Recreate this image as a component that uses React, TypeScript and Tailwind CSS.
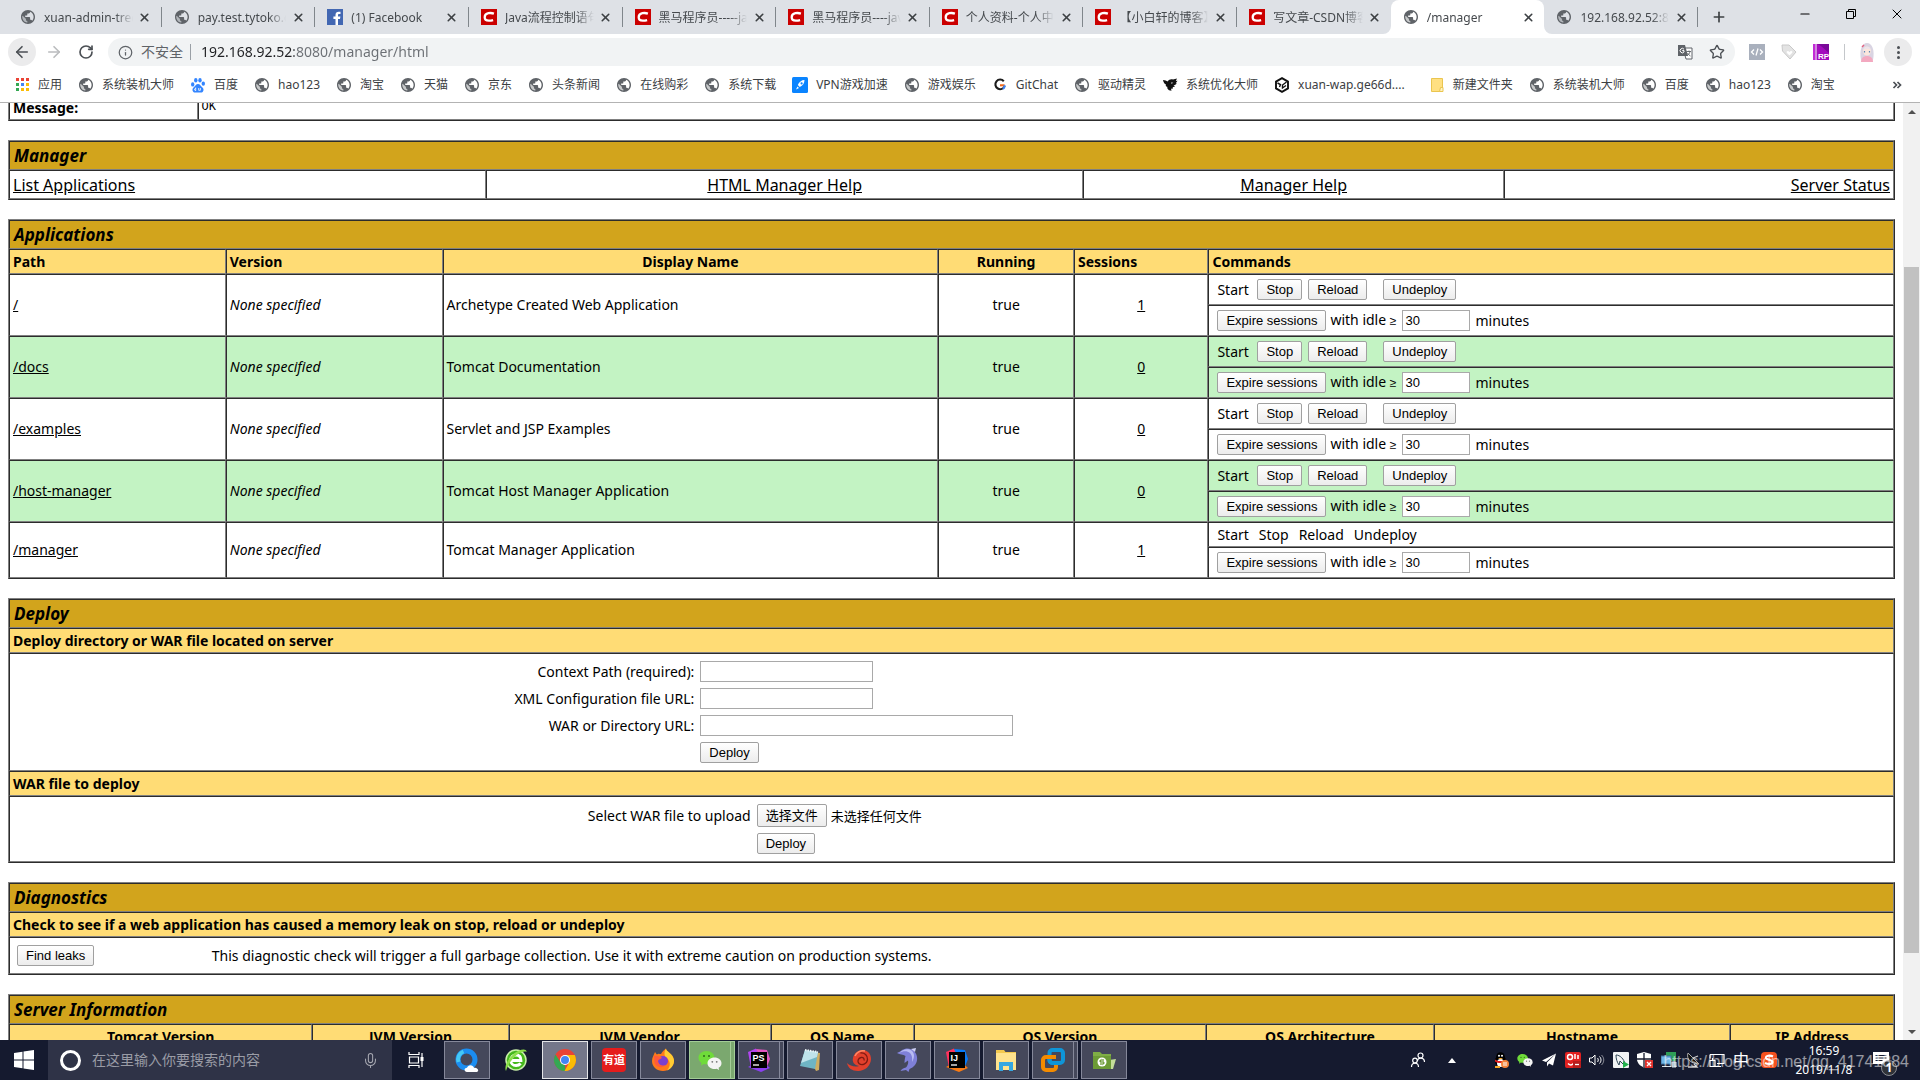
import type { ReactNode } from "react";
import {
  ArrowLeft,
  ArrowRight,
  RotateCw,
  Info,
  Star,
  X,
  Plus,
  Minus,
  Mic,
} from "lucide-react";

/* ---------- favicons ---------- */

function Globe() {
  return (
    <svg viewBox="2 2 20 20" className="size-[14px] text-[#5f6368]" fill="currentColor" aria-hidden="true">
      <path d="M12 2C6.48 2 2 6.48 2 12s4.48 10 10 10 10-4.48 10-10S17.52 2 12 2zm-1 17.93c-3.95-.49-7-3.85-7-7.93 0-.62.08-1.21.21-1.79L9 15v1c0 1.1.9 2 2 2v1.93zm6.9-2.54c-.26-.81-1-1.39-1.9-1.39h-1v-3c0-.55-.45-1-1-1H8v-2h2c.55 0 1-.45 1-1V7h2c1.1 0 2-.9 2-2v-.41c2.93 1.19 5 4.06 5 7.41 0 2.08-.8 3.97-2.1 5.39z" />
      <path d="M4.400 10.500 9 15v1c0 1.100.9 2 2 2v1.900C7 19.500 4 16 4 12z" fill="#5f6368" opacity=".35" />
    </svg>
  );
}

function FacebookIcon() {
  return (
    <svg viewBox="0 0 16 16" className="size-4" aria-hidden="true">
      <rect width="16" height="16" fill="#4267b2" />
      <path d="M11 16V10h2l.4-2.4H11V6.2c0-.8.3-1.2 1.2-1.2h1.3V2.8c-.4 0-1-.1-1.8-.1-2 0-3.2 1.2-3.2 3.2v1.7H6.4V10h2.1v6z" fill="#fff" />
    </svg>
  );
}

function CsdnIcon() {
  return (
    <svg viewBox="0 0 16 16" className="size-4" aria-hidden="true">
      <rect width="16" height="16" fill="#cb0000" />
      <path d="M12.9 4.6C11.2 4 9 3.9 7.400 4.200 5 4.700 3.700 6.400 3.700 8.300c0 2.100 1.500 3.400 4.100 3.400 1.500 0 3-.2 4.300-.6" fill="none" stroke="#fff" strokeWidth="2.3" />
    </svg>
  );
}

function BaiduIcon() {
  return (
    <svg viewBox="0 0 16 16" className="size-4" fill="#3385ff" aria-hidden="true">
      <ellipse cx="2.700" cy="7.400" rx="1.700" ry="2.200" />
      <ellipse cx="5.800" cy="3.200" rx="1.700" ry="2.300" />
      <ellipse cx="10" cy="3.200" rx="1.700" ry="2.300" />
      <ellipse cx="13.300" cy="6.700" rx="1.700" ry="2.100" />
      <path d="M8 7c2.100 0 2.700 2 4.200 3.200 1.600 1.300 1.700 3.200.6 4.500-1.100 1.200-2.900.7-4.800.7s-3.700.5-4.800-.7c-1.100-1.300-1-3.200.6-4.500C5.300 9 5.900 7 8 7z" />
      <path d="M5.700 10.500v3.300M8.700 11v2.300h1.700V11M5.700 13.500c-1.600 0-1.600-2 0-2" stroke="#fff" strokeWidth=".8" fill="none" />
    </svg>
  );
}

function AppsIcon() {
  const c = ["#ea4335", "#ea4335", "#ea4335", "#34a853", "#4285f4", "#fbbc05", "#34a853", "#fbbc05", "#fbbc05"];
  return (
    <svg viewBox="0 0 16 16" className="size-4" aria-hidden="true">
      {c.map((f, i) => (
        <rect key={i} x={2 + (i % 3) * 5} y={1 + Math.floor(i / 3) * 5} width="3" height="3" fill={f} />
      ))}
    </svg>
  );
}

function RocketIcon() {
  return (
    <svg viewBox="0 0 16 16" className="size-4" aria-hidden="true">
      <rect width="16" height="16" rx="1.500" fill="#0a84ff" />
      <path d="M12.500 3c-3 0-5.500 2-6.700 5l2 2c3-1.300 4.700-4 4.700-7zM5.500 9.500 4 12.500l3-1.500z" fill="#fff" />
      <circle cx="9.600" cy="6.400" r="1.100" fill="#0a84ff" />
    </svg>
  );
}

function GitChatIcon() {
  return (
    <svg viewBox="0 0 16 16" className="size-4" fill="none" strokeWidth="2.100" aria-hidden="true">
      <path d="M11.800 4.200A4.800 4.800 0 1 0 12.700 9" stroke="#1b1b1b" />
      <path d="M8 8.300h4.600" stroke="#f26a1b" />
      <path d="M12.600 8.300c0 1.600-.6 2.900-1.600 3.700" stroke="#3b82f6" />
    </svg>
  );
}

function BirdIcon() {
  return (
    <svg viewBox="0 0 16 16" className="size-4" fill="#111" aria-hidden="true">
      <path d="M1 3c2 .2 3.500.6 4.500 1.500C7 2.500 9 2 11 2.600L15 1.500 13.800 4l1.700-.2-1.700 2.400 1 .3c-1 1.200-2 1.700-3.300 1.800l1.500 1.400-2.300.3.300 1.600-2 .2.500 2-2.500-.6-1.500-1.400-.3-2C3.800 9.500 3.500 8.500 4 7.500 2.500 7 1.500 5.500 1 3z" />
      <path d="M9 5.500l2.300.3-1.800 1z" fill="#fff" />
    </svg>
  );
}

function CubeIcon() {
  return (
    <svg viewBox="0 0 16 16" className="size-4" fill="none" stroke="#111" strokeWidth="1.900" aria-hidden="true">
      <path d="M8 1.200 14 4.600v6.800L8 14.800 2 11.400V4.600z" />
      <path d="M3.500 6 6.500 7.500 5.500 10M12.500 5 8.500 8v3l3.500-2.500" strokeWidth="1.400" />
    </svg>
  );
}

function FolderIcon() {
  return (
    <svg viewBox="0 0 16 16" className="size-4" aria-hidden="true">
      <path d="M2.500 1.500h11v13h-11z" fill="#ffe082" stroke="#eac54f" />
      <path d="M11.500 10.500h2.500v4h-3.500z" fill="#fff3c4" stroke="#eac54f" />
    </svg>
  );
}

/* ---------- browser chrome ---------- */

type Tab = { icon: ReactNode; title: string; active?: boolean; bare?: boolean };

const tabs: Tab[] = [
  { icon: <Globe />, title: "xuan-admin-tree" },
  { icon: <Globe />, title: "pay.test.tytoko.com" },
  { icon: <FacebookIcon />, title: "(1) Facebook" },
  { icon: <CsdnIcon />, title: "Java流程控制语句" },
  { icon: <CsdnIcon />, title: "黑马程序员-----java" },
  { icon: <CsdnIcon />, title: "黑马程序员----java" },
  { icon: <CsdnIcon />, title: "个人资料-个人中心" },
  { icon: <CsdnIcon />, title: "【小白轩的博客】" },
  { icon: <CsdnIcon />, title: "写文章-CSDN博客", bare: true },
  { icon: <Globe />, title: "/manager", active: true },
  { icon: <Globe />, title: "192.168.92.52:8080" },
];

function TabStrip() {
  return (
    <div className="flex h-[34px] bg-[#dee1e6] pl-2">
      <div className="flex min-w-0 flex-1">
        {tabs.map((t, i) => (
          <div
            key={i}
            className={
              "relative flex min-w-0 flex-1 basis-0 items-center " +
              (t.active ? "rounded-t-lg bg-white" : "")
            }
          >
            <div className="flex min-w-0 flex-1 items-center gap-2 pr-2 pl-3">
              <span className="flex size-4 shrink-0 items-center justify-center">{t.icon}</span>
              <span className="min-w-0 flex-1 overflow-hidden pt-0.5 text-xs leading-4 whitespace-nowrap text-[#45494d] [mask-image:linear-gradient(to_right,#000_80%,transparent)]">
                {t.title}
              </span>
              <button aria-label={"关闭 " + t.title} className="-ml-1 flex size-4 shrink-0 items-center justify-center text-[#3c4043]">
                <X size={13} strokeWidth={3} />
              </button>
            </div>
            {!t.active && !t.bare && <span className="h-5 w-px bg-[#80868b]" />}
            {t.active && (
              <>
                <svg viewBox="0 0 8 8" className="absolute bottom-0 -left-2 size-2" aria-hidden="true">
                  <path d="M8 0v8H0a8 8 0 0 0 8-8z" fill="#fff" />
                </svg>
                <svg viewBox="0 0 8 8" className="absolute -right-2 bottom-0 size-2" aria-hidden="true">
                  <path d="M0 0v8h8a8 8 0 0 1-8-8z" fill="#fff" />
                </svg>
              </>
            )}
          </div>
        ))}
      </div>
      <div className="flex w-[222px] shrink-0">
        <button aria-label="新标签页" className="flex w-[42px] items-center justify-center text-[#3c4043]">
          <Plus size={16} strokeWidth={2.500} />
        </button>
        <div className="ml-auto flex h-7">
          <button aria-label="最小化" className="flex w-[46px] items-center justify-center text-black">
            <Minus size={14} strokeWidth={2} />
          </button>
          <button aria-label="还原" className="flex w-[46px] items-center justify-center text-black">
            <svg viewBox="0 0 10 10" className="size-[10px]" fill="none" stroke="currentColor" aria-hidden="true">
              <path d="M.5 2.500h7v7h-7zM2.500 2.500v-2h7v7h-2" />
            </svg>
          </button>
          <button aria-label="关闭" className="flex w-[46px] items-center justify-center text-black">
            <X size={16} strokeWidth={1.500} />
          </button>
        </div>
      </div>
    </div>
  );
}

function Toolbar() {
  return (
    <div className="flex h-9 items-center pr-2 pl-2">
      <button aria-label="返回" className="flex size-7 items-center justify-center rounded-full bg-[#ebebec] text-[#4b4f54]">
        <ArrowLeft size={18} strokeWidth={2.200} />
      </button>
      <button aria-label="前进" className="ml-1 flex size-7 items-center justify-center text-[#babcbe]">
        <ArrowRight size={18} strokeWidth={2.200} />
      </button>
      <button aria-label="重新加载" className="ml-1 flex size-7 items-center justify-center text-[#4b4f54]">
        <RotateCw size={16} strokeWidth={2.500} />
      </button>
      <div className="ml-2 flex h-7 min-w-0 flex-1 items-center rounded-full bg-[#f1f3f4] pr-[10px] pl-[10px]">
        <Info size={15} strokeWidth={2} className="text-[#5f6368]" />
        <span className="ml-2 text-sm leading-5 text-[#5f6368]">不安全</span>
        <span className="ml-[7px] h-4 w-px bg-[#9aa0a6]" />
        <label htmlFor="address" className="sr-only">地址</label>
        <div className="relative ml-[10px] min-w-0 flex-1 text-sm leading-5">
          <input
            id="address"
            defaultValue="192.168.92.52:8080/manager/html"
            className="w-full bg-transparent bg-[linear-gradient(to_right,#202124_93px,#6b6f74_93px)] bg-clip-text text-transparent caret-black outline-none"
          />
        </div>
        <button aria-label="翻译此页" className="flex size-4 items-center justify-center">
          <svg viewBox="0 0 16 16" className="size-4" aria-hidden="true">
            <path d="M6 4h9v11H9z" fill="#fff" stroke="#5f6368" />
            <path d="M1 1h7l3 11H1z" fill="#5f6368" />
            <path d="M7 5.200A2.200 2.200 0 1 0 7 8V6.600H5.200" fill="none" stroke="#fff" />
            <path d="M9.500 7.500h4.500M12 6.500v1M13 7.500c-.4 2-1.500 3.200-3 4M10.500 9c.7 1.300 1.700 2.200 3 3" fill="none" stroke="#5f6368" strokeWidth=".9" />
          </svg>
        </button>
        <button aria-label="为此标签页添加书签" className="ml-4 text-[#4b4f54]">
          <Star size={16} strokeWidth={2} />
        </button>
      </div>
      <div className="ml-[14px] flex items-center">
        <button aria-label="代码扩展" className="mr-4">
          <svg viewBox="0 0 16 16" className="size-4" aria-hidden="true">
            <rect width="16" height="16" fill="#a9b0bd" />
            <path d="M5 5.500 2.500 8 5 10.500M11 5.500 13.500 8 11 10.500M9 4.500l-2 7" fill="none" stroke="#fff" strokeWidth="1.300" />
          </svg>
        </button>
        <button aria-label="优惠扩展" className="mr-4">
          <svg viewBox="0 0 16 16" className="size-4" aria-hidden="true">
            <path d="M1 1h7l7 7-6 7-7.500-8z" fill="#e3e3e3" stroke="#c9c9c9" />
            <path d="M8.500 12 5.500 9c-1.300-1.700 1.300-3.500 3-1.500 1.700-2 4.300-.2 3 1.500z" fill="#fff" stroke="#d5d5d5" strokeWidth=".6" />
          </svg>
        </button>
        <button aria-label="Axure RP 扩展">
          <svg viewBox="0 0 16 16" className="size-4" aria-hidden="true">
            <rect width="16" height="16" fill="#a30dbd" />
            <path d="M0 0h2v16H0z" fill="#c22ad6" />
            <path d="M2.500 0h1v16h-1z" fill="#fff" />
            <path d="M4 0h12v9L8 2z" fill="#7a0a99" />
            <text x="5" y="14.500" fontSize="8" fontWeight="700" fill="#fff" fontFamily="Liberation Sans">RP</text>
          </svg>
        </button>
        <span className="ml-[15px] h-4 w-px bg-[#c4c7ca]" />
        <button aria-label="用户" className="ml-[13px]">
          <svg viewBox="0 0 18 20" className="h-5 w-[18px]" aria-hidden="true">
            <path d="M3 18C1 8 4 1 9 1s8 7 6 17z" fill="#d9d4e2" />
            <path d="M3 20c0-4 2.500-6 6-6s6 2 6 6z" fill="#f3a9c0" />
            <ellipse cx="9" cy="9" rx="4" ry="4.500" fill="#fbe6dd" />
            <path d="M5 8c1-4 7-4 8 0-2-2-6-2-8 0z" fill="#e8e4ef" />
            <path d="M6.500 9v1.500M11.500 9v1.500" stroke="#5b87b5" strokeWidth="1.200" />
            <path d="M4 5l2-2" stroke="#e5607f" strokeWidth="1.500" />
          </svg>
        </button>
        <button aria-label="菜单" className="ml-2 flex size-7 flex-col items-center justify-center gap-0.5 rounded-full bg-[#ebebec]">
          <span className="size-[3px] rounded-full bg-[#4b4f54]" />
          <span className="size-[3px] rounded-full bg-[#4b4f54]" />
          <span className="size-[3px] rounded-full bg-[#4b4f54]" />
        </button>
      </div>
    </div>
  );
}

const bookmarks: { icon: ReactNode; name: string; wide?: boolean }[] = [
  { icon: <AppsIcon />, name: "应用" },
  { icon: <Globe />, name: "系统装机大师" },
  { icon: <BaiduIcon />, name: "百度" },
  { icon: <Globe />, name: "hao123" },
  { icon: <Globe />, name: "淘宝" },
  { icon: <Globe />, name: "天猫" },
  { icon: <Globe />, name: "京东" },
  { icon: <Globe />, name: "头条新闻" },
  { icon: <Globe />, name: "在线购彩" },
  { icon: <Globe />, name: "系统下载" },
  { icon: <RocketIcon />, name: "VPN游戏加速" },
  { icon: <Globe />, name: "游戏娱乐" },
  { icon: <GitChatIcon />, name: "GitChat" },
  { icon: <Globe />, name: "驱动精灵" },
  { icon: <BirdIcon />, name: "系统优化大师" },
  { icon: <CubeIcon />, name: "xuan-wap.ge66d....", wide: true },
  { icon: <FolderIcon />, name: "新建文件夹" },
  { icon: <Globe />, name: "系统装机大师" },
  { icon: <Globe />, name: "百度" },
  { icon: <Globe />, name: "hao123" },
  { icon: <Globe />, name: "淘宝" },
];

function Bookmarks() {
  return (
    <nav aria-label="书签栏" className="flex h-8 items-center gap-4 pr-[18px] pb-[3px] pl-[14px] text-xs leading-4 text-[#3c4043]">
      {bookmarks.map((b, i) => (
        <a key={i} href="#" className={"flex shrink-0 items-center gap-2 whitespace-nowrap " + (b.wide ? "pr-2" : "")}>
          <span className="flex size-4 items-center justify-center">{b.icon}</span>
          {b.name}
        </a>
      ))}
      <button aria-label="更多书签" className="ml-auto text-[#4b4f54]">
        <svg viewBox="0 0 10 8" className="h-2 w-[10px]" fill="none" stroke="currentColor" strokeWidth="1.700" aria-hidden="true">
          <path d="M1.500 1l3 3-3 3M5.500 1l3 3-3 3" />
        </svg>
      </button>
    </nav>
  );
}

/* ---------- manager page ---------- */

const TABLE =
  "w-full table-fixed border-separate border-spacing-0 border border-t-[#808080] border-l-[#808080] border-r-[#2c2c2c] border-b-[#2c2c2c]";
const EDGE = "border border-t-[#2c2c2c] border-l-[#2c2c2c] border-r-[#808080] border-b-[#808080] ";
const BUTTON =
  "h-[21px] rounded-[2px] border border-[#a0a0a0] bg-linear-to-b from-white to-[#ececec] px-2 font-['Liberation_Sans','Noto_Sans_CJK_SC',sans-serif] text-[13px] leading-4 whitespace-nowrap text-black";
const INPUT =
  "h-[21px] border border-[#a9a9a9] bg-white px-0.5 font-['Liberation_Sans',sans-serif] text-[13px] leading-4 text-black outline-none";

function Title({ span, children }: { span: number; children: ReactNode }) {
  return (
    <tr>
      <th colSpan={span} className={EDGE + "h-[29px] bg-[#d2a41c] px-1 text-left text-[17px] leading-5 font-bold italic"}>
        {children}
      </th>
    </tr>
  );
}

function Head({ span = 1, align = "text-left", children }: { span?: number; align?: string; children: ReactNode }) {
  return (
    <th colSpan={span} className={EDGE + "h-[25px] bg-[#ffdc75] px-[3px] text-sm leading-4 font-bold " + align}>
      {children}
    </th>
  );
}

const apps = [
  { path: "/", name: "Archetype Created Web Application", sessions: 1, self: false },
  { path: "/docs", name: "Tomcat Documentation", sessions: 0, self: false },
  { path: "/examples", name: "Servlet and JSP Examples", sessions: 0, self: false },
  { path: "/host-manager", name: "Tomcat Host Manager Application", sessions: 0, self: false },
  { path: "/manager", name: "Tomcat Manager Application", sessions: 1, self: true },
];

function AppRows({ app, tint }: { app: (typeof apps)[number]; tint: boolean }) {
  const cell = EDGE + (tint ? "bg-[#c3f3c3] " : "bg-white ") + "px-[3px] ";
  return (
    <>
      <tr>
        <td rowSpan={2} className={cell}><a href="#" className="underline">{app.path}</a></td>
        <td rowSpan={2} className={cell + "italic"}>None specified</td>
        <td rowSpan={2} className={cell}>{app.name}</td>
        <td rowSpan={2} className={cell + "text-center"}>true</td>
        <td rowSpan={2} className={cell + "text-center"}><a href="#" className="underline">{app.sessions}</a></td>
        {app.self ? (
          <td className={cell + "h-[25px]"}>
            <div className="flex items-center gap-2.5 pl-[5px]">
              <span>Start</span>
              <span>Stop</span>
              <span>Reload</span>
              <span>Undeploy</span>
            </div>
          </td>
        ) : (
          <td className={cell + "h-[31px]"}>
            <div className="flex items-center pl-[5px]">
              <span className="w-10">Start</span>
              <button className={BUTTON}>Stop</button>
              <button className={BUTTON + " ml-1.5"}>Reload</button>
              <button className={BUTTON + " ml-4"}>Undeploy</button>
            </div>
          </td>
        )}
      </tr>
      <tr>
        <td className={cell + "h-[31px]"}>
          <div className="flex items-center pl-[5px]">
            <button className={BUTTON}>Expire sessions</button>
            <label htmlFor={"idle" + app.path} className="w-[76px] pl-1 whitespace-nowrap">
              with idle <span className="font-['Liberation_Sans',sans-serif] text-xs leading-4">≥</span>
            </label>
            <input id={"idle" + app.path} defaultValue="30" className={INPUT + " w-[68px]"} />
            <span className="pl-[5px]">minutes</span>
          </div>
        </td>
      </tr>
    </>
  );
}

const serverColumns = [
  "Tomcat Version",
  "JVM Version",
  "JVM Vendor",
  "OS Name",
  "OS Version",
  "OS Architecture",
  "Hostname",
  "IP Address",
];

function ManagerPage() {
  return (
    <main className="-mt-2 flex min-w-0 flex-1 flex-col gap-[19px] px-2 text-sm leading-4 text-black">
      <table className={TABLE}>
        <colgroup>
          <col className="w-[10%]" />
          <col />
        </colgroup>
        <tbody>
          <tr>
            <th className={EDGE + "h-6 px-[3px] text-left font-bold"}>Message:</th>
            <td className={EDGE + "h-6 px-[3px] pb-0.5 font-['Liberation_Mono',monospace] text-xs leading-4"}>OK</td>
          </tr>
        </tbody>
      </table>

      <table className={TABLE}>
        <colgroup>
          <col className="w-[25.3%]" />
          <col className="w-[31.7%]" />
          <col className="w-[22.3%]" />
          <col />
        </colgroup>
        <tbody>
          <Title span={4}>Manager</Title>
          <tr className="text-base leading-5">
            <td className={EDGE + "h-[29px] px-[3px]"}><a href="#" className="underline">List Applications</a></td>
            <td className={EDGE + "px-[3px] text-center"}><a href="#" className="underline">HTML Manager Help</a></td>
            <td className={EDGE + "px-[3px] text-center"}><a href="#" className="underline">Manager Help</a></td>
            <td className={EDGE + "px-[3px] text-right"}><a href="#" className="underline">Server Status</a></td>
          </tr>
        </tbody>
      </table>

      <table className={TABLE}>
        <colgroup>
          <col className="w-[11.5%]" />
          <col className="w-[11.5%]" />
          <col className="w-[26.3%]" />
          <col className="w-[7.2%]" />
          <col className="w-[7.13%]" />
          <col />
        </colgroup>
        <tbody>
          <Title span={6}>Applications</Title>
          <tr>
            <Head>Path</Head>
            <Head>Version</Head>
            <Head align="text-center">Display Name</Head>
            <Head align="text-center">Running</Head>
            <Head>Sessions</Head>
            <Head>Commands</Head>
          </tr>
          {apps.map((a, i) => (
            <AppRows key={a.path} app={a} tint={i % 2 === 1} />
          ))}
        </tbody>
      </table>

      <table className={TABLE}>
        <tbody>
          <Title span={1}>Deploy</Title>
          <tr><Head>Deploy directory or WAR file located on server</Head></tr>
          <tr>
            <td className={EDGE + "h-[118px] px-[3px]"}>
              <form className="grid grid-cols-[36.3%_1fr] items-center justify-items-start gap-1.5">
                <label htmlFor="ctx" className="justify-self-end">Context Path (required):</label>
                <input id="ctx" className={INPUT + " w-[173px]"} />
                <label htmlFor="xml" className="justify-self-end">XML Configuration file URL:</label>
                <input id="xml" className={INPUT + " w-[173px]"} />
                <label htmlFor="war" className="justify-self-end">WAR or Directory URL:</label>
                <input id="war" className={INPUT + " w-[313px]"} />
                <button type="button" className={BUTTON + " col-start-2"}>Deploy</button>
              </form>
            </td>
          </tr>
          <tr><Head>WAR file to deploy</Head></tr>
          <tr>
            <td className={EDGE + "h-[66px] px-[3px]"}>
              <form className="grid grid-cols-[39.3%_1fr] items-center justify-items-start gap-1.5">
                <label htmlFor="upload" className="justify-self-end">Select WAR file to upload</label>
                <label className="flex items-center gap-1">
                  <input id="upload" type="file" className="sr-only" />
                  <span className={BUTTON + " flex h-[23px] items-center"}>选择文件</span>
                  <span className="text-[13px]">未选择任何文件</span>
                </label>
                <button type="button" className={BUTTON + " col-start-2"}>Deploy</button>
              </form>
            </td>
          </tr>
        </tbody>
      </table>

      <table className={TABLE}>
        <tbody>
          <Title span={1}>Diagnostics</Title>
          <tr><Head>Check to see if a web application has caused a memory leak on stop, reload or undeploy</Head></tr>
          <tr>
            <td className={EDGE + "h-[37px] px-[3px]"}>
              <div className="flex items-center pl-1">
                <div className="w-[10.4%]"><button className={BUTTON}>Find leaks</button></div>
                <p>This diagnostic check will trigger a full garbage collection. Use it with extreme caution on production systems.</p>
              </div>
            </td>
          </tr>
        </tbody>
      </table>

      <table className={TABLE}>
        <colgroup>
          <col className="w-[16.1%]" />
          <col className="w-[10.4%]" />
          <col className="w-[13.9%]" />
          <col className="w-[7.6%]" />
          <col className="w-[15.5%]" />
          <col className="w-[12.1%]" />
          <col className="w-[15.7%]" />
          <col />
        </colgroup>
        <tbody>
          <Title span={8}>Server Information</Title>
          <tr>
            {serverColumns.map((c) => (
              <Head key={c} align="text-center">{c}</Head>
            ))}
          </tr>
        </tbody>
      </table>
    </main>
  );
}

function Scrollbar() {
  return (
    <div className="flex w-[17px] shrink-0 flex-col bg-[#f1f1f1]">
      <button aria-label="向上滚动" className="flex h-[17px] items-center justify-center">
        <svg viewBox="0 0 8 4" className="h-1 w-2" fill="#505050" aria-hidden="true"><path d="M4 0l4 4H0z" /></svg>
      </button>
      <div className="grow-[147]" />
      <div className="mx-px grow-[686] bg-[#c1c1c1]" />
      <div className="grow-[70]" />
      <button aria-label="向下滚动" className="flex h-[17px] items-center justify-center">
        <svg viewBox="0 0 8 4" className="h-1 w-2" fill="#505050" aria-hidden="true"><path d="M0 0h8L4 4z" /></svg>
      </button>
    </div>
  );
}

/* ---------- taskbar ---------- */

const ICON = "size-6";

function QQBrowserIcon() {
  return (
    <svg viewBox="0 0 24 24" className={ICON} aria-hidden="true">
      <circle cx="11.500" cy="11.500" r="8.500" fill="none" stroke="#1b8df0" strokeWidth="5" />
      <path d="M3.500 14a8.500 8.500 0 0 1 5-10.500" fill="none" stroke="#45c8f5" strokeWidth="4" />
      <path d="M12 24c-3 0-3.500-4 0-4.200 1-3.500 6-3.500 7 0 4-.8 6 4.200 2 4.200z" fill="#fff" />
    </svg>
  );
}

function BrowserEIcon() {
  return (
    <svg viewBox="0 0 24 24" className={ICON} aria-hidden="true">
      <circle cx="12" cy="12" r="10" fill="#45b81c" stroke="#c9f0a9" strokeWidth="1.500" />
      <path d="M6.500 12.500h10.500c0-3.500-2-5.500-5-5.500s-5.300 2-5.300 5.200S9 17.500 12 17.500c2 0 3.600-.8 4.600-2" fill="none" stroke="#fff" strokeWidth="2.800" />
      <path d="M2 23C0 19 3 12 9 6.500S23 0 22.500 4c-3-1.500-8 1-12 5S3.500 18 2 23z" fill="#8ce04a" />
    </svg>
  );
}

function ChromeIcon() {
  return (
    <svg viewBox="0 0 24 24" className={ICON} aria-hidden="true">
      <circle cx="12" cy="12" r="11" fill="#ea4335" />
      <path d="M2.470 6.500 7.670 14.500 12 17l.5 6A11 11 0 0 1 2.470 6.500z" fill="#34a853" />
      <path d="M12 7h9.800a11 11 0 0 1-10.300 16l4.800-8.500z" fill="#fbbc05" />
      <circle cx="12" cy="12" r="5" fill="#fff" />
      <circle cx="12" cy="12" r="4" fill="#4285f4" />
    </svg>
  );
}

function FirefoxIcon() {
  return (
    <svg viewBox="0 0 24 24" className={ICON} aria-hidden="true">
      <path d="M1 13C1 9 3 7 4 4c1 1 1 2 2 2.500C7 5 9 6 10 6c1-2 3-4 5-5.500C15 4 22 5 23 12c.5 6-5 11-11 11S1 19 1 13z" fill="#ff7a1a" />
      <path d="M15 .5C15 4 22 5 23 12c.4 5-3 9-7 10.500 6-7 1-12-2-14C13 6 13.500 2.500 15 .5z" fill="#ffcc33" />
      <circle cx="12" cy="13" r="5" fill="#7b3fd0" />
      <path d="M3 8c3-1 5 1 8 1.500-1 2-4 1.500-4 4 0 3 4 5 7.500 3.500C11 21 4 19 3.500 14z" fill="#ff5a3c" />
    </svg>
  );
}

function WeChatIcon({ className = ICON }: { className?: string }) {
  return (
    <svg viewBox="0 0 24 24" className={className} aria-hidden="true">
      <path d="M8.500 3C4 3 .500 6 .500 9.700c0 2.100 1.200 4 3 5.200L3 17.500l2.900-1.600c.8.200 1.700.3 2.600.3 4.500 0 8-2.900 8-6.500S13 3 8.500 3z" fill="#6fdb3a" />
      <path d="M16.500 9.500c-4 0-7 2.500-7 5.700s3 5.800 7 5.800c.8 0 1.500-.1 2.200-.3l2.400 1.300-.5-2.200c1.700-1 2.900-2.700 2.900-4.600 0-3.200-3-5.700-7-5.700z" fill="#f4f4f4" />
      <g fill="#2f6b1a"><circle cx="6" cy="8" r="1" /><circle cx="11" cy="8" r="1" /></g>
      <g fill="#777"><circle cx="14.300" cy="13.800" r=".9" /><circle cx="18.700" cy="13.800" r=".9" /></g>
    </svg>
  );
}

function JetBrainsIcon({ label, colors }: { label: string; colors: [string, string, string] }) {
  return (
    <svg viewBox="0 0 24 24" className={ICON} aria-hidden="true">
      <path d="M1 4 9 .5 13 8 4 20z" fill={colors[0]} />
      <path d="M9 1 20 2l3 9-4 10z" fill={colors[1]} />
      <path d="M1 19 14 12l9 8-9 4z" fill={colors[2]} />
      <rect x="4" y="4" width="16" height="16" fill="#000" />
      <text x="5.500" y="12.500" fontSize="9" fontWeight="700" fill="#fff" fontFamily="Liberation Sans">{label}</text>
      <path d="M6 17h6" stroke="#fff" strokeWidth="1.300" />
    </svg>
  );
}

function NotepadIcon() {
  return (
    <svg viewBox="0 0 24 24" className={ICON} aria-hidden="true">
      <path d="M8 3 22 5 21 22 18 23z" fill="#cfae62" />
      <path d="M7 2 20 4 17 21 2 18z" fill="#6fb5c4" />
      <path d="M7 2 20 4 19 9 3 15z" fill="#bfe3ea" />
      <path d="M7 2 20 4" stroke="#eef6f8" strokeWidth="2" strokeDasharray="1.500 1" />
    </svg>
  );
}

function SwirlIcon() {
  return (
    <svg viewBox="0 0 24 24" className={ICON} aria-hidden="true">
      <path d="M0 15c3 3 8 4.500 12 3C7 17 5 14 6 10c1-5 5-8 10-8 5 .5 8 4 8 9-.3 7-6 12-13 12C5 23 1 20 0 15z" fill="#e2402c" />
      <path d="M17 12.500c.6-2-1-3.500-3-3-3 .6-4 4-2 6 3 2.500 8 .5 8.500-4 .3-4-3-7-7-6.500" fill="none" stroke="#7d1a12" strokeWidth="1.300" />
      <path d="M8 8c1.500-4 6-6 10-5" fill="none" stroke="#ff8a65" strokeWidth="1.500" />
    </svg>
  );
}

function DolphinIcon() {
  return (
    <svg viewBox="0 0 24 24" className={ICON} aria-hidden="true">
      <path d="M1 5c2-1 3.500-1.500 5-3C10-.5 15 0 18 3c4 4 4 10 1 14-1.500 2-3.500 3.300-5.500 4l-1 3-2.500-2-5.500 1c1-2 3-3 5.500-3.500C12 17 12.500 15 12 12.500L8.500 15c0-3 .5-5 1-7C7 6.500 4 6.500 1 5z" fill="#7f80d8" />
      <path d="M3 5c4-2 8-2.500 11 0 2 2 2.500 5 2 9 3-5 2.500-9-.5-11.500C12 0 7 1 3 5z" fill="#b9bcf2" />
      <path d="M15 1l5-1-1 4z" fill="#cfd1f7" />
    </svg>
  );
}

function ExplorerIcon() {
  return (
    <svg viewBox="0 0 24 24" className={ICON} aria-hidden="true">
      <path d="M2 2h8l1.500 2H22v18H2z" fill="#f3c94f" />
      <path d="M2 5h20v17H2z" fill="#ffe38d" />
      <path d="M5 23v-9h14v9h-4v-5H9v5z" fill="#35a7e0" />
    </svg>
  );
}

function VmwareIcon() {
  return (
    <svg viewBox="0 0 24 24" className={ICON} fill="none" strokeWidth="4" aria-hidden="true">
      <rect x="8.500" y="2" width="13.500" height="13" rx="3" stroke="#0f95d7" />
      <path d="M15 9H5a3 3 0 0 0-3 3v7a3 3 0 0 0 3 3h7a3 3 0 0 0 3-3v-2" stroke="#f38b00" />
      <path d="M8.500 11v1a3 3 0 0 0 3 3H17" stroke="#0f95d7" />
    </svg>
  );
}

function GreenFolderIcon() {
  return (
    <svg viewBox="0 0 24 24" className={ICON} aria-hidden="true">
      <path d="M1 4h7l2 2h9v15H1z" fill="#7fae45" />
      <path d="M17 12l7-1-3 10h-4z" fill="#c4dd9a" />
      <path d="M1 8h18v13H1z" fill="#6c9b36" />
      <circle cx="10" cy="14" r="4.500" fill="#fff" />
      <path d="M9 17v-5l-1.500 1.500M11 11v5l1.500-1.500" fill="none" stroke="#6c9b36" strokeWidth="1.300" />
    </svg>
  );
}

const TASK = "flex h-[38px] w-[46px] items-center justify-center border ";
const OPEN = "border-[#85889a] bg-[#45485b]";

function TaskButton({ label, tone = OPEN, children }: { label: string; tone?: string; children: ReactNode }) {
  return (
    <button aria-label={label} className={TASK + tone}>
      {children}
    </button>
  );
}

function Stacked({ label, tone = OPEN, children }: { label: string; tone?: string; children: ReactNode }) {
  return (
    <button aria-label={label} className="flex h-[38px] w-[46px]">
      <span className={"flex h-full flex-1 items-center justify-center border " + tone}>{children}</span>
      <span className={"h-full w-1 border border-l-0 " + tone} />
    </button>
  );
}

function Tray() {
  return (
    <div className="ml-auto flex items-center text-white">
      <svg viewBox="0 0 16 16" className="size-4" fill="none" stroke="#fff" strokeWidth="1.200" aria-hidden="true">
        <circle cx="10.500" cy="3.500" r="2.500" /><path d="M7.500 9c0-4 7-4 7 1" />
        <circle cx="5" cy="8.500" r="2.300" /><path d="M1.500 15c0-5 7-5 7 0" />
      </svg>
      <svg viewBox="0 0 8 5" className="ml-[22px] h-[5px] w-2" fill="#fff" aria-hidden="true"><path d="M4 0l4 5H0z" /></svg>
      <div className="ml-[37px] flex items-center gap-2">
        <svg viewBox="0 0 16 16" className="size-4" aria-hidden="true">
          <ellipse cx="7.500" cy="9" rx="5.500" ry="6.500" fill="#000" />
          <circle cx="7.500" cy="4.500" r="4.300" fill="#000" />
          <ellipse cx="7.500" cy="11" rx="3.500" ry="4" fill="#fff" />
          <path d="M2 7.500c3 2 8 2 11 0v2c-3 2-8 2-11 0z" fill="#e32222" />
          <circle cx="6" cy="3.800" r="1" fill="#fff" /><circle cx="9" cy="3.800" r="1" fill="#fff" />
          <path d="M5 6h5l-2.500 1.500zM2 14h5v2H2z" fill="#f9a825" />
          <circle cx="12" cy="12" r="4" fill="#f5843c" />
          <path d="M10 11h4M10 13h4" stroke="#fff" />
        </svg>
        <WeChatIcon className="size-4" />
        <svg viewBox="0 0 16 16" className="size-4" fill="#fff" aria-hidden="true">
          <path d="M15 1.500 1 8.500l4 1.500zM15 1.500 6 10.500v4l2-3 4 2z" />
        </svg>
        <svg viewBox="0 0 16 16" className="size-4" aria-hidden="true">
          <rect width="16" height="16" rx="2" fill="#e02020" />
          <circle cx="5" cy="5" r="2.500" fill="none" stroke="#fff" strokeWidth="1.500" />
          <path d="M10 2v5M13 3v4M3 11.500c2 2 4 2 5 0" stroke="#fff" strokeWidth="1.500" fill="none" />
          <rect x="8" y="9" width="8" height="7" fill="#b71c1c" /><path d="M10 12.500h4" stroke="#fff" strokeWidth="1.300" />
        </svg>
        <svg viewBox="0 0 16 16" className="size-4" fill="none" stroke="#fff" aria-hidden="true">
          <path d="M.5 6v4h2.500l3 3V3L3 6zM8.500 6c1 1 1 3 0 4M10.500 4.500c2 2 2 5 0 7" />
          <path d="M12.500 3c3 3 3 7 0 10" opacity=".5" />
        </svg>
        <svg viewBox="0 0 16 16" className="size-4" aria-hidden="true">
          <rect width="16" height="16" rx="1" fill="#f2f4f5" />
          <path d="M3 3c4 0 8 4 9 9M3 3c0 4 1 7 3 10l1-4 3 3" fill="none" stroke="#2b4454" />
          <path d="M10 9l6 3.500-6 3.500z" fill="#21b14b" />
        </svg>
        <svg viewBox="0 0 16 16" className="size-4" aria-hidden="true">
          <path d="M7 0l7 2v5c0 4-3 7-7 8.500C3 14 0 11 0 7V2z" fill="#fff" />
          <path d="M7 1v14M0 7h14" stroke="#151a2c" strokeWidth="1.300" />
          <rect x="8" y="8" width="8" height="8" fill="#e1322d" />
          <path d="M10 10l4 4M14 10l-4 4" stroke="#fff" strokeWidth="1.300" />
        </svg>
        <svg viewBox="0 0 16 16" className="size-4" aria-hidden="true">
          <rect x="5" width="10" height="9" fill="#2e9e57" />
          <rect x="0" y="4" width="10" height="8" fill="#6fb5e6" stroke="#3a6f9c" />
          <path d="M1 14.500h9M11 10v5h4v-5z" stroke="#d8e4ec" fill="#9fb5c2" />
        </svg>
        <svg viewBox="0 0 16 16" className="size-4" aria-hidden="true">
          <path d="M3 1c-2 6 3 11 11 11z" fill="#111" stroke="#a9a9a9" />
          <path d="M3 15h9l-3-3M8 6l5-2" stroke="#cfcfcf" strokeWidth="1.300" fill="none" />
        </svg>
        <svg viewBox="0 0 16 16" className="size-4" fill="none" stroke="#fff" strokeWidth="1.200" aria-hidden="true">
          <path d="M1 2.500h14v9H8M4 14.500h8M1 8.500h5v6H1zM1 2.500v4M3.500 6v2.500" />
        </svg>
        <span className="text-base leading-4">中</span>
      </div>
      <svg viewBox="0 0 16 16" className="ml-3 size-4" aria-hidden="true">
        <rect width="16" height="16" rx="4" fill="#f4511e" />
        <path d="M12 4.500C9 3 4.500 3.500 5 6c.5 2 6.500 1.500 6.500 4 0 2.300-4.500 2.500-7.500 1" fill="none" stroke="#fff" strokeWidth="2.200" />
      </svg>
      <time className="flex w-[94px] flex-col items-center text-xs leading-[19px]">
        <span>16:59</span>
        <span>2019/11/8</span>
      </time>
      <button aria-label="通知" className="relative mr-[31px] ml-0.5">
        <svg viewBox="0 0 16 16" className="size-4" aria-hidden="true">
          <path d="M0 0h16v12h-4v4l-4-4H0z" fill="#fff" />
          <path d="M2.500 3.500h11M2.500 6h11M2.500 8.500h7" stroke="#151a2c" />
        </svg>
        <span className="absolute top-2 left-2 flex size-4 items-center justify-center rounded-full border border-[#8a8c92] bg-[#2f3238] text-xs leading-4 font-bold text-white">1</span>
      </button>
    </div>
  );
}

function Taskbar() {
  return (
    <footer className="relative flex h-10 shrink-0 items-center bg-[#151a2f]">
      <button aria-label="开始" className="flex w-12 items-center justify-center">
        <svg viewBox="0 0 20 20" className="size-5" fill="#fff" aria-hidden="true">
          <path d="M0 3l8.500-1.200v7.700H0zM9.500 1.600 20 0v9.500H9.500zM0 10.500h8.500v7.700L0 17zM9.500 10.500H20V20L9.500 18.400z" />
        </svg>
      </button>
      <div className="flex h-10 w-[344px] items-center bg-[#2f3347] pr-[13px] pl-3">
        <span className="size-[21px] shrink-0 rounded-full border-[3px] border-white" />
        <label htmlFor="search" className="sr-only">搜索</label>
        <input
          id="search"
          placeholder="在这里输入你要搜索的内容"
          className="ml-[11px] min-w-0 flex-1 bg-transparent text-sm leading-5 text-white outline-none placeholder:text-[#9a9ca6]"
        />
        <Mic size={17} strokeWidth={1.500} className="text-[#a5a7b0]" />
      </div>
      <button aria-label="任务视图" className="mr-1 flex w-12 items-center justify-center">
        <svg viewBox="0 0 16 16" className="size-4" fill="none" stroke="#fff" strokeWidth="1.200" aria-hidden="true">
          <path d="M1 0v2.500h10V0M1 16v-2.500h10V16M1.500 5h9v6h-9zM14 1v14" />
          <path d="M14 5v4" strokeWidth="3" />
        </svg>
      </button>
      <div className="flex items-center gap-[3px]">
        <TaskButton label="QQ浏览器"><QQBrowserIcon /></TaskButton>
        <TaskButton label="360浏览器" tone="border-transparent"><BrowserEIcon /></TaskButton>
        <TaskButton label="Chrome" tone="border-[#e4e5e8] bg-[#74778a]"><ChromeIcon /></TaskButton>
        <TaskButton label="有道">
          <span className="flex size-6 items-center justify-center rounded-sm bg-[#e51c1c] text-[11px] leading-4 font-bold text-white">有道</span>
        </TaskButton>
        <TaskButton label="Firefox"><FirefoxIcon /></TaskButton>
        <Stacked label="微信" tone="border-[#a3cc96] bg-[#7ba86f]"><WeChatIcon /></Stacked>
        <Stacked label="PhpStorm"><JetBrainsIcon label="PS" colors={["#b345f1", "#e356c0", "#8a3ff0"]} /></Stacked>
        <TaskButton label="记事本"><NotepadIcon /></TaskButton>
        <TaskButton label="Navicat"><SwirlIcon /></TaskButton>
        <TaskButton label="MySQL"><DolphinIcon /></TaskButton>
        <TaskButton label="IntelliJ IDEA"><JetBrainsIcon label="IJ" colors={["#fe315d", "#087cfa", "#f97a12"]} /></TaskButton>
        <TaskButton label="文件资源管理器"><ExplorerIcon /></TaskButton>
        <Stacked label="VMware"><VmwareIcon /></Stacked>
        <TaskButton label="文件同步"><GreenFolderIcon /></TaskButton>
      </div>
      <Tray />
      <span className="pointer-events-none absolute right-[11px] bottom-2 font-['Liberation_Sans',sans-serif] text-base leading-5 text-white/55">
        https://blog.csdn.net/qq_41741884
      </span>
    </footer>
  );
}

export default function App() {
  return (
    <div className="flex h-screen flex-col overflow-hidden bg-white font-['Noto_Sans','Noto_Sans_CJK_SC',sans-serif]">
      <header className="shrink-0 border-b border-[#b3b3b3]">
        <TabStrip />
        <Toolbar />
        <Bookmarks />
      </header>
      <div className="flex min-h-0 flex-1 overflow-hidden">
        <ManagerPage />
        <Scrollbar />
      </div>
      <Taskbar />
    </div>
  );
}
